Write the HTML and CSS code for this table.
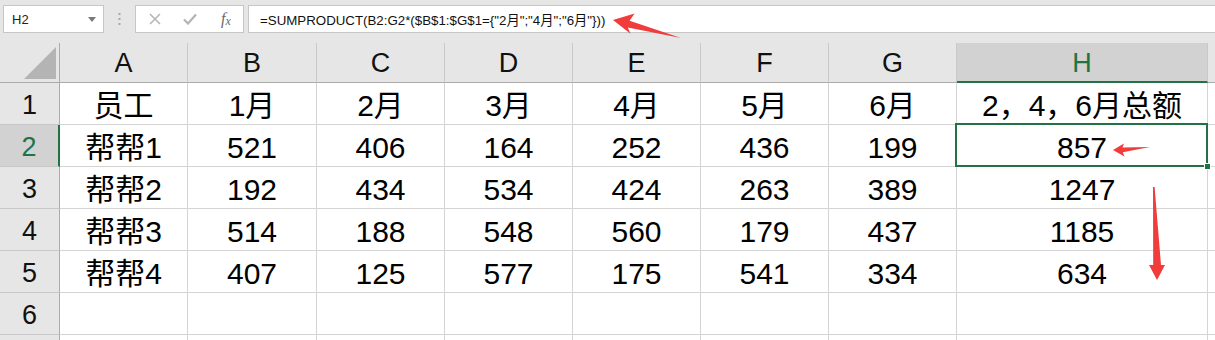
FILE: index.html
```html
<!DOCTYPE html>
<html lang="zh-CN">
<head>
<meta charset="utf-8">
<title>SUMPRODUCT</title>
<link rel="stylesheet" href="styles.css">
</head>
<body>
<div class="app">
  <div class="toolbar">
    <div class="namebox">
      <span class="name">H2</span>
      <svg class="caret" width="8" height="5" viewBox="0 0 8 5"><path d="M0 0H8L4 5Z" fill="#7a7a7a"/></svg>
    </div>
    <div class="grip">
      <svg width="3" height="12" viewBox="0 0 3 12"><rect x="0.5" y="0" width="2" height="2" fill="#a8a8a8"/><rect x="0.5" y="5" width="2" height="2" fill="#a8a8a8"/><rect x="0.5" y="10" width="2" height="2" fill="#a8a8a8"/></svg>
    </div>
    <div class="fxbtns">
      <svg class="ico" width="12" height="12" viewBox="0 0 12 12"><path d="M1 1L11 11M11 1L1 11" stroke="#b4b4b4" stroke-width="1.5" fill="none"/></svg>
      <svg class="ico" width="14" height="12" viewBox="0 0 14 12"><path d="M1 6.5L5 10.5L13 1.5" stroke="#b4b4b4" stroke-width="2.2" fill="none"/></svg>
      <span class="fx">f<sub>x</sub></span>
    </div>
    <div class="formula">=SUMPRODUCT(B2:G2*($B$1:$G$1={"2月";"4月";"6月"}))</div>
  </div>

  <div class="sheet">
    <div class="corner"><svg width="32" height="32" viewBox="0 0 32 32"><path d="M0 32L32 0V32Z" fill="#b4b4b4"/></svg></div>
    <div class="ch">A</div><div class="ch">B</div><div class="ch">C</div><div class="ch">D</div><div class="ch">E</div><div class="ch">F</div><div class="ch">G</div><div class="ch ch-sel">H</div><div class="ch ch-end"></div>

    <div class="rh">1</div><div class="c">员工</div><div class="c">1月</div><div class="c">2月</div><div class="c">3月</div><div class="c">4月</div><div class="c">5月</div><div class="c">6月</div><div class="c">2，4，6月总额</div><div class="c end"></div>

    <div class="rh rh-sel">2</div><div class="c">帮帮1</div><div class="c">521</div><div class="c">406</div><div class="c">164</div><div class="c">252</div><div class="c">436</div><div class="c">199</div><div class="c sel">857<span class="handle"></span></div><div class="c end"></div>

    <div class="rh">3</div><div class="c">帮帮2</div><div class="c">192</div><div class="c">434</div><div class="c">534</div><div class="c">424</div><div class="c">263</div><div class="c">389</div><div class="c">1247</div><div class="c end"></div>

    <div class="rh">4</div><div class="c">帮帮3</div><div class="c">514</div><div class="c">188</div><div class="c">548</div><div class="c">560</div><div class="c">179</div><div class="c">437</div><div class="c">1185</div><div class="c end"></div>

    <div class="rh">5</div><div class="c">帮帮4</div><div class="c">407</div><div class="c">125</div><div class="c">577</div><div class="c">175</div><div class="c">541</div><div class="c">334</div><div class="c">634</div><div class="c end"></div>

    <div class="rh">6</div><div class="c"></div><div class="c"></div><div class="c"></div><div class="c"></div><div class="c"></div><div class="c"></div><div class="c"></div><div class="c"></div><div class="c end"></div>

    <div class="rh"></div><div class="c"></div><div class="c"></div><div class="c"></div><div class="c"></div><div class="c"></div><div class="c"></div><div class="c"></div><div class="c"></div><div class="c end"></div>
  </div>

  <svg class="arrows" width="1215" height="340" viewBox="0 0 1215 340">
    <polygon points="613,20 634.6,13.5 629.6,20.8 681,38 627.8,27.5 630.5,33.8" fill="#f23b3b"/>
    <polygon points="1113,150 1124,143.5 1122.5,147.6 1150,147 1122.8,152.3 1124.5,156.5" fill="#f23b3b"/>
    <polygon points="1153,187 1154.6,187 1161,265 1165,265 1157,280 1149,265 1153.2,265" fill="#f23b3b"/>
  </svg>
</div>
</body>
</html>
```

FILE: styles.css
```css
html, body {
  margin: 0;
  padding: 0;
  overflow: hidden;
  background: #ffffff;
}

.app {
  position: relative;
  width: 1215px;
  height: 340px;
  overflow: hidden;
  font-family: "Liberation Sans", "Noto Sans CJK SC", sans-serif;
}

/* ---------- formula bar ---------- */
.toolbar {
  height: 43px;
  box-sizing: border-box;
  background: #e6e6e6;
  display: flex;
  align-items: flex-start;
  padding: 5px 0 0 3px;
}

.namebox {
  width: 101px;
  height: 28px;
  box-sizing: border-box;
  background: #fff;
  border: 1px solid #c6c6c6;
  display: flex;
  align-items: center;
  justify-content: space-between;
  padding: 0 7px 0 8px;
}

.name {
  font-size: 13px;
  color: #222;
}

.caret {
  display: block;
  margin-top: 1px;
}

.grip {
  width: 31px;
  height: 28px;
  display: flex;
  align-items: center;
  justify-content: center;
}

.grip svg {
  display: block;
}

.fxbtns {
  width: 109px;
  height: 28px;
  box-sizing: border-box;
  background: #fff;
  border: 1px solid #c6c6c6;
  display: flex;
  align-items: center;
  padding-left: 13px;
  gap: 22px;
  margin-right: 4px;
}

.ico {
  display: block;
}

.fx {
  font-family: "Liberation Serif", "DejaVu Serif", serif;
  font-style: italic;
  font-size: 16px;
  color: #6a6a6a;
  margin-left: 2px;
  line-height: 1;
}

.fx sub {
  font-size: 12px;
  vertical-align: -1px;
}

.formula {
  flex: 1;
  height: 28px;
  box-sizing: border-box;
  background: #fff;
  border: 1px solid #c6c6c6;
  border-right: none;
  font-size: 13.3px;
  color: #111;
  display: flex;
  align-items: center;
  padding-left: 11px;
  white-space: nowrap;
}

/* ---------- sheet grid ---------- */
.sheet {
  display: grid;
  grid-template-columns: 60px 128px 129px 128px 128px 128px 128px 128px 251px 1fr;
  grid-template-rows: 40px repeat(7, 42px);
}

.sheet > div {
  box-sizing: border-box;
  display: flex;
  justify-content: center;
  align-items: flex-end;
  white-space: nowrap;
}

.sheet > .corner {
  background: #e6e6e6;
  border-right: 1px solid #ababab;
  border-bottom: 1px solid #ababab;
  justify-content: flex-end;
  padding: 0 3px 3px 0;
}

.corner svg {
  display: block;
}

.ch {
  background: #e6e6e6;
  border-right: 1px solid #c8c8c8;
  border-bottom: 1px solid #ababab;
  font-size: 27px;
  line-height: 27px;
  color: #111;
  padding-bottom: 5px;
}

.ch-sel {
  background: #d2d2d2;
  color: #217346;
  border-bottom: 2px solid #217346;
  padding-bottom: 4px;
}

.ch-end {
  border-right: none;
}

.rh {
  background: #e6e6e6;
  border-right: 1px solid #ababab;
  border-bottom: 1px solid #c8c8c8;
  font-size: 27px;
  line-height: 27px;
  color: #111;
  padding-bottom: 5px;
}

.rh-sel {
  background: #d2d2d2;
  color: #217346;
  border-right: 2px solid #217346;
}

.c {
  background: #fff;
  border-right: 1px solid #d4d4d4;
  border-bottom: 1px solid #d4d4d4;
  font-size: 30px;
  line-height: 30px;
  color: #000;
  padding-bottom: 3px;
}

.c.end {
  border-right: none;
}

.c.sel {
  position: relative;
  z-index: 2;
}

.c.sel::after {
  content: "";
  position: absolute;
  top: -2px;
  left: -2px;
  right: -1px;
  bottom: -1px;
  border: 2px solid #217346;
  pointer-events: none;
}

.handle {
  position: absolute;
  right: -4px;
  bottom: -4px;
  width: 5px;
  height: 5px;
  background: #217346;
  border: 1px solid #fff;
  z-index: 3;
}

/* ---------- annotation arrows ---------- */
.arrows {
  position: absolute;
  left: 0;
  top: 0;
  pointer-events: none;
  z-index: 10;
}
```
